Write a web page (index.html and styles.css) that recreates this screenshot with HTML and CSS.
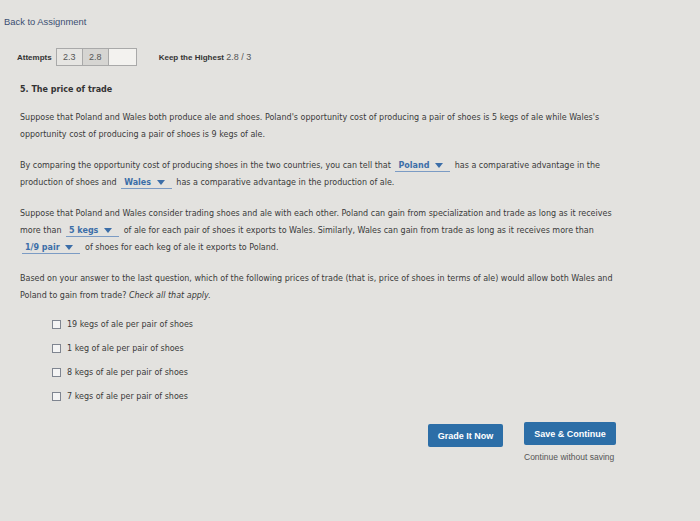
FILE: index.html
```html
<!DOCTYPE html>
<html lang="en">
<head>
  <meta charset="UTF-8">
  <title>The price of trade</title>
  <link rel="stylesheet" href="styles.css">
</head>
<body>

  <a class="back-link" href="#">Back to Assignment</a>

  <!-- Attempts -->
  <div class="attempts">
    <span class="attempts-label">Attempts</span>
    <div class="attempt-cells">
      <span class="cell">2.3</span>
      <span class="cell used">2.8</span>
      <span class="cell empty"></span>
    </div>
    <span class="keep">Keep the Highest <span class="score">2.8 / 3</span></span>
  </div>

  <!-- Question -->
  <div class="question">
    <h3 class="q-title">5. The price of trade</h3>

    <p>Suppose that Poland and Wales both produce ale and shoes. Poland's opportunity cost of producing a pair of shoes is 5 kegs of ale while Wales's opportunity cost of producing a pair of shoes is 9 kegs of ale.</p>

    <p>By comparing the opportunity cost of producing shoes in the two countries, you can tell that
      <span class="select">Poland <i class="caret"></i></span>
      has a comparative advantage in the production of shoes and
      <span class="select">Wales <i class="caret"></i></span>
      has a comparative advantage in the production of ale.</p>

    <p>Suppose that Poland and Wales consider trading shoes and ale with each other. Poland can gain from specialization and trade as long as it receives more than
      <span class="select">5 kegs <i class="caret"></i></span>
      of ale for each pair of shoes it exports to Wales. Similarly, Wales can gain from trade as long as it receives more than
      <span class="select">1/9 pair <i class="caret"></i></span>
      of shoes for each keg of ale it exports to Poland.</p>

    <p class="prompt">Based on your answer to the last question, which of the following prices of trade (that is, price of shoes in terms of ale) would allow both Wales and Poland to gain from trade? <em>Check all that apply.</em></p>

    <ul class="choices">
      <li><span class="box"></span>19 kegs of ale per pair of shoes</li>
      <li><span class="box"></span>1 keg of ale per pair of shoes</li>
      <li><span class="box"></span>8 kegs of ale per pair of shoes</li>
      <li><span class="box"></span>7 kegs of ale per pair of shoes</li>
    </ul>
  </div>

  <!-- Actions -->
  <div class="actions">
    <button class="btn grade">Grade It Now</button>
    <div class="save-wrap">
      <button class="btn save">Save &amp; Continue</button>
      <a class="skip" href="#">Continue without saving</a>
    </div>
  </div>

</body>
</html>
```

FILE: styles.css
```css
body {
  margin: 0;
  padding: 16px 0 0 0;
  background-color: #e3e2df;
  color: #3a3a3a;
  font-family: "DejaVu Sans", Verdana, sans-serif;
  font-size: 8px;
  min-height: 505px;
}
.back-link {
  display: block;
  margin-left: 4px;
  font-family: "Liberation Sans", Arial, sans-serif;
  font-size: 9.4px;
  line-height: 11px;
  color: #3b4f72;
  text-decoration: none;
}
.attempts {
  display: flex;
  align-items: center;
  margin: 21px 0 0 17px;
  font-family: "Liberation Sans", Arial, sans-serif;
  font-size: 8px;
}
.attempts-label {
  font-weight: bold;
  color: #333;
  margin-right: 4px;
}
.attempt-cells {
  display: flex;
  border: 1px solid #a9a9a9;
}
.cell {
  width: 25px;
  height: 16px;
  line-height: 16px;
  text-align: center;
  font-size: 9px;
  color: #555;
  border-right: 1px solid #a9a9a9;
  background: #e6e5e2;
}
.cell.used {
  background: #d6d5d2;
}
.cell.empty {
  width: 27px;
  border-right: none;
  background: #f3f2ef;
}
.keep {
  margin-left: 22px;
  font-weight: bold;
  color: #333;
}
.keep .score {
  font-weight: normal;
  font-size: 9px;
  color: #555;
}
.question {
  padding-left: 20px;
  width: 598px;
}
.q-title {
  margin: 19px 0 14px 0;
  font-size: 8px;
  line-height: 10px;
  font-weight: bold;
  color: #333;
}
p {
  margin: 0 0 14px 0;
  line-height: 17px;
}
p.prompt {
  margin-bottom: 8px;
}
.select {
  white-space: nowrap;
  border-bottom: 1px solid #7b9bc4;
  color: #3c6ea8;
  font-weight: bold;
  padding: 0 7px 1px 3px;
  margin: 0 2px;
}
.caret {
  display: inline-block;
  margin-left: 3px;
  width: 0;
  height: 0;
  border-left: 4px solid transparent;
  border-right: 4px solid transparent;
  border-top: 5px solid #3c6ea8;
}
.choices {
  list-style: none;
  margin: 0 0 0 32px;
  padding: 0;
}
.choices li {
  display: flex;
  align-items: center;
  height: 24px;
}
.box {
  width: 7px;
  height: 7px;
  border: 1px solid #7f8590;
  background: #f4f4f4;
  margin-right: 6px;
}
.actions {
  display: flex;
  align-items: flex-start;
  margin: 14px 0 0 428px;
}
.btn {
  border: none;
  border-radius: 2px;
  background-color: #2c6ea7;
  color: #fff;
  font-family: "Liberation Sans", Arial, sans-serif;
  font-size: 9px;
  font-weight: bold;
  height: 23px;
  cursor: pointer;
}
.grade {
  width: 75px;
  margin-top: 2px;
}
.save-wrap {
  display: flex;
  flex-direction: column;
  margin-left: 21px;
}
.save {
  width: 92px;
}
.skip {
  margin-top: 7px;
  font-family: "Liberation Sans", Arial, sans-serif;
  font-size: 8.5px;
  color: #555;
  text-decoration: none;
}
```
